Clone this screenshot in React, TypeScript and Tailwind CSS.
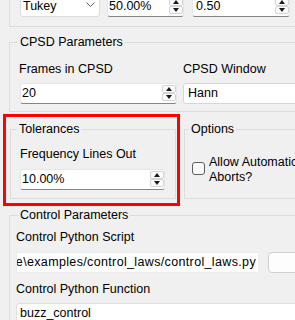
import React from "react";

const line = "border-[#dcdcdc]";

function Arrow({ up }: { up?: boolean }) {
  return (
    <div className="flex h-[8px] w-[14px] items-center justify-center rounded-[2px] border border-[#d4d4d4] bg-[#fbfbfb]">
      <svg width="6" height="4" viewBox="0 0 6 4">
        {up ? <path d="M0 4 L3 0 L6 4 Z" fill="#1a1a1a" /> : <path d="M0 0 L6 0 L3 4 Z" fill="#1a1a1a" />}
      </svg>
    </div>
  );
}

function SpinBox({
  value,
  className = "",
  textClass = "leading-[19px]",
}: {
  value: string;
  className?: string;
  textClass?: string;
}) {
  return (
    <div
      className={`flex h-[21px] items-start rounded-[3px] border border-[#e6e6e6] border-b-[#868686] bg-white ${className}`}
    >
      <span className={`flex-1 self-end pl-[1px] ${textClass}`}>{value}</span>
      <div className="flex flex-col pt-[1px]">
        <Arrow up />
        <Arrow />
      </div>
    </div>
  );
}

function Group({
  title,
  legend,
  className = "",
  children,
}: {
  title: string;
  legend: string;
  className?: string;
  children: React.ReactNode;
}) {
  return (
    <fieldset className={`min-w-0 border ${line} ${className}`}>
      <legend className={`px-[2px] leading-[16px] ${legend}`}>{title}</legend>
      {children}
    </fieldset>
  );
}

export default function App() {
  return (
    <div className="relative h-[320px] w-[295px] overflow-hidden bg-[#f0f0f0] font-['Liberation_Sans',Arial,sans-serif] text-[12.5px] text-black">
      <div className="w-[360px]">
        {/* Window group, top cut off */}
        <div className={`ml-[9px] -mt-[10px] flex h-[37px] border-b border-l pl-[10px] pt-[6px] ${line}`}>
          <div className="flex h-[21px] w-[80px] items-end justify-between rounded-[3px] border border-[#dcdcdc] bg-white pb-[3px] pl-[2px] pr-[4px]">
            <span className="leading-[14px]">Tukey</span>
            <svg width="9" height="6" viewBox="0 0 9 6" className="mb-[5px]">
              <path d="M0.5 0.5 L4.5 4.5 L8.5 0.5" fill="none" stroke="#606060" strokeWidth="1" />
            </svg>
          </div>
          <SpinBox value="50.00%" className="ml-[7px] w-[77px]" textClass="leading-[14px] pb-[3px]" />
          <SpinBox value="0.50" className="ml-[8px] w-[98px] pl-[2px]" textClass="leading-[14px] pb-[3px]" />
        </div>

        {/* CPSD Parameters */}
        <Group title="CPSD Parameters" legend="ml-[8px]" className="ml-[9px] mt-[7px]">
          <div className="flex gap-[7px] pb-[7px] pl-[9px]">
            <div className="w-[157px]">
              <div className="mt-[11px] leading-[16px]">Frames in CPSD</div>
              <SpinBox value="20" className="ml-[1px] mt-[6px] w-[157px]" />
            </div>
            <div className="w-[150px]">
              <div className="mt-[11px] leading-[16px]">CPSD Window</div>
              <div className="mt-[6px] flex h-[21px] items-center rounded-[3px] border border-[#d6d6d6] bg-white pl-[4px]">
                <span className="leading-[19px]">Hann</span>
              </div>
            </div>
          </div>
        </Group>

        {/* Tolerances + Options */}
        <div className="mt-[9px] flex items-stretch">
          <Group title="Tolerances" legend="ml-[6px]" className="ml-[10px] w-[166px]">
            <div className="pb-[8px] pl-[9px]">
              <div className="mt-[9px] leading-[16px]">Frequency Lines Out</div>
              <SpinBox value="10.00%" className="mt-[7px] w-[145px]" />
            </div>
          </Group>
          <Group title="Options" legend="ml-[4px]" className="ml-[8px] w-[150px]">
            <div className="mt-[18px] flex items-start gap-[4px] pl-[7px]">
              <div className="mt-[7px] h-[13px] w-[13px] shrink-0 rounded-[3px] border border-[#5e5e5e] bg-[#f9f9f9]" />
              <span className="w-[120px] leading-[15px]">Allow Automatic Aborts?</span>
            </div>
          </Group>
        </div>

        {/* Control Parameters */}
        <Group title="Control Parameters" legend="ml-[8px]" className="ml-[9px] mt-[8px]">
          <div className="pl-[6px]">
            <div className="mt-[6px] leading-[16px]">Control Python Script</div>
            <div className="mt-[7px] flex gap-[9px]">
              <div className="flex h-[21px] w-[243px] items-center justify-end overflow-hidden border border-[#ececec] bg-white pr-[2px]">
                <span className="whitespace-nowrap leading-[19px] tracking-[0.35px]">
                  C:\Users\user\rattlesnake\examples/control_laws/control_laws.py
                </span>
              </div>
              <div className="h-[21px] w-[75px] rounded-[4px] border border-[#d0d0d0] bg-[#fdfdfd]" />
            </div>
            <div className="mt-[8px] leading-[16px]">Control Python Function</div>
            <div className="mt-[6px] flex h-[21px] w-[320px] items-center rounded-[3px] border border-[#e0e0e0] bg-white pl-[3px]">
              <span className="leading-[19px]">buzz_control</span>
            </div>
          </div>
        </Group>
      </div>

      {/* red highlight annotation */}
      <div className="absolute left-[3px] top-[114px] h-[92px] w-[177px] border-[3px] border-[#ff0000]" />
    </div>
  );
}
